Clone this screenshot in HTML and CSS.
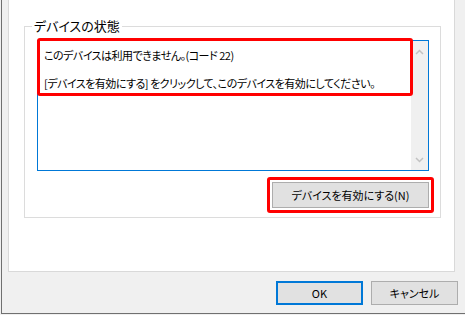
FILE: index.html
```html
<!DOCTYPE html>
<html lang="ja">

<head>
    <meta charset="UTF-8">
    <meta name="viewport" content="width=device-width, initial-scale=1.0">
    <title>デバイスのプロパティ</title>
    <link rel="stylesheet" href="styles.css">
</head>

<body>
    <div class="frame">
        <div class="page">
            <fieldset class="group">
                <legend>デバイスの状態</legend>

                <div class="status">
                    <div class="status-text">
                        <p>このデバイスは利用できません。(コード 22)</p>
                        <p>[デバイスを有効にする] をクリックして、このデバイスを有効にしてください。</p>
                    </div>
                    <div class="scrollbar">
                        <svg width="9" height="6" viewBox="0 0 9 6">
                            <polyline points="1,5 4.5,1.5 8,5" />
                        </svg>
                        <svg width="9" height="6" viewBox="0 0 9 6">
                            <polyline points="1,1 4.5,4.5 8,1" />
                        </svg>
                    </div>
                    <div class="mark mark-status"></div>
                </div>

                <div class="actions">
                    <button class="btn btn-enable">デバイスを有効にする(N)</button>
                </div>
            </fieldset>
        </div>

        <div class="footer">
            <button class="btn btn-default">OK</button>
            <button class="btn">キャンセル</button>
        </div>
    </div>
</body>

</html>
```

FILE: styles.css
```css
* {
    box-sizing: border-box;
}

body {
    margin: 0;
    padding: 0;
    width: 465px;
    height: 315px;
    overflow: hidden;
    background-color: #f0f0f0;
    font-family: "Noto Sans CJK JP", "Noto Sans", sans-serif;
    font-size: 11px;
    font-feature-settings: "palt";
    color: #000;
}

.frame {
    margin-left: 1px;
    height: 314px;
    border-left: 1px solid #707070;
    border-bottom: 1px solid #707070;
}

.page {
    margin-left: 6px;
    width: 447px;
    height: 272px;
    background-color: #fff;
    border: 1px solid #d9d9d9;
    border-top: none;
    padding-top: 18px;
}

/* グループボックス */
.group {
    margin: 0 0 0 15px;
    width: 417px;
    height: 200px;
    padding: 6px 0 0 12px;
    border: 1px solid #dcdcdc;
}

.group legend {
    margin-left: -5px;
    padding: 0 2px;
    height: 16px;
    font-size: 13px;
    line-height: 16px;
}

.status {
    position: relative;
    display: flex;
    width: 392px;
    height: 131px;
    border: 1px solid #0078d7;
}

.status-text {
    flex: 1;
    padding: 7px 0 0 6px;
    line-height: 14px;
    letter-spacing: -0.5px;
}

.status-text p {
    margin: 0 0 14px;
    white-space: nowrap;
}

.scrollbar {
    width: 17px;
    display: flex;
    flex-direction: column;
    justify-content: space-between;
    align-items: center;
    padding: 8px 0 7px;
    background-color: #f0f0f0;
}

.scrollbar polyline {
    fill: none;
    stroke: #c2c2c2;
    stroke-width: 1.5;
}

/* 赤枠 */
.mark {
    position: absolute;
    border: 3px solid #ff0000;
    border-radius: 3px;
}

.mark-status {
    left: -1px;
    top: -3px;
    width: 376px;
    height: 58px;
}

.actions {
    display: flex;
    justify-content: flex-end;
    width: 392px;
    margin-top: 11px;
}

.btn {
    font-family: inherit;
    font-size: 11px;
    font-feature-settings: "palt";
    color: #000;
    background-color: #e1e1e1;
    border: 1px solid #adadad;
    border-radius: 0;
    padding: 0;
    width: 87px;
    height: 24px;
}

.btn-enable {
    position: relative;
    width: 157px;
    height: 26px;
}

.btn-enable::after {
    content: "";
    position: absolute;
    left: -6px;
    top: -6px;
    right: -6px;
    bottom: -6px;
    border: 3px solid #ff0000;
    border-radius: 3px;
}

.btn-default {
    border: 2px solid #0078d7;
}

.footer {
    display: flex;
    justify-content: flex-end;
    gap: 8px;
    padding: 9px 7px 0 0;
}
```
